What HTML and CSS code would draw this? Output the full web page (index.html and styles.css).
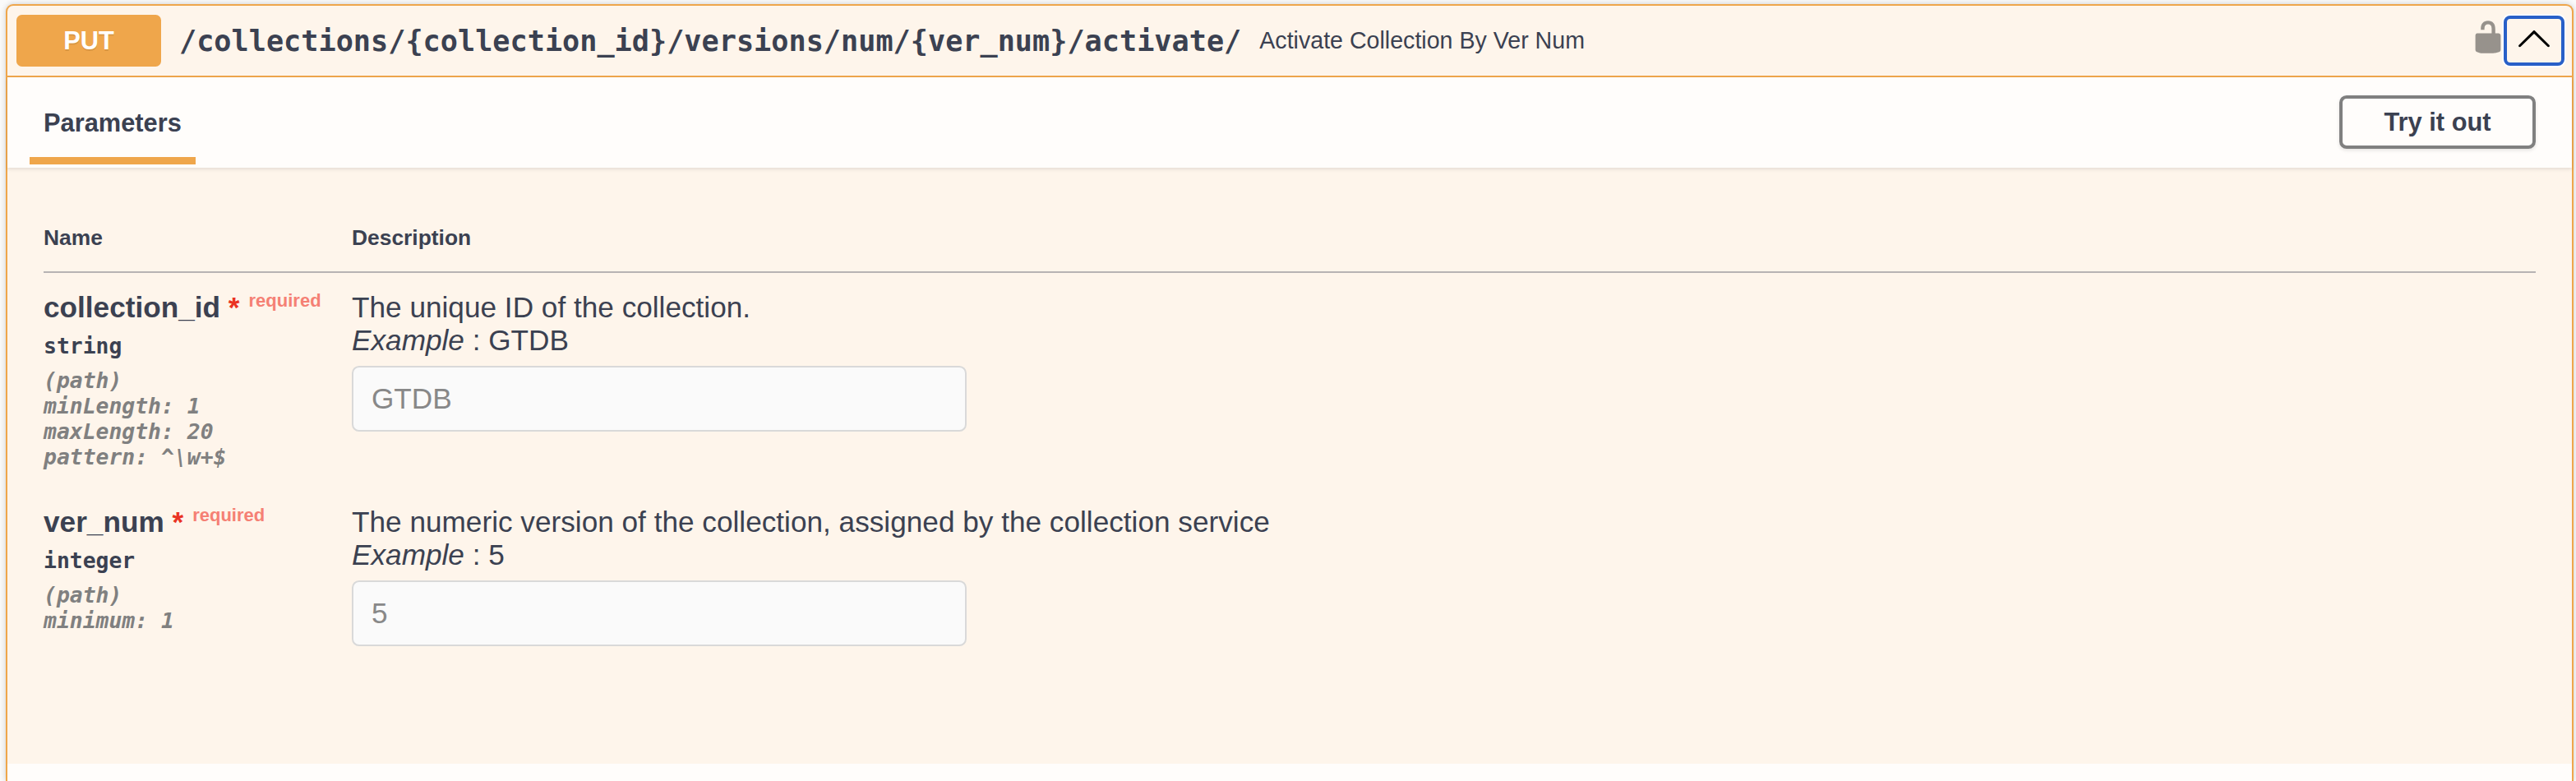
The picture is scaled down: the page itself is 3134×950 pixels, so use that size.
FILE: index.html
```html
<!DOCTYPE html>
<html lang="en">
<head>
<meta charset="utf-8">
<title>Activate Collection By Ver Num</title>
<link rel="stylesheet" href="styles.css">
</head>
<body>
<main class="opblock">
  <header class="summary">
    <span class="method">PUT</span>
    <span class="path">/collections/{collection_id}/versions/num/{ver_num}/activate/</span>
    <span class="summary-text">Activate Collection By Ver Num</span>
    <svg class="lock" viewBox="0 0 20 20" aria-hidden="true"><path d="M15.8 8H14V5.6C14 2.703 12.665 1 10 1 7.334 1 6 2.703 6 5.6V6h2v-.801C8 3.754 8.797 3 10 3c1.203 0 2 .754 2 2.199V8H4c-.553 0-1 .646-1 1.199V17c0 .549.428 1.139.951 1.307l1.197.387C5.672 18.861 6.55 19 7.1 19h5.8c.549 0 1.428-.139 1.951-.307l1.196-.387c.524-.167.953-.757.953-1.306V9.199C17 8.646 16.352 8 15.8 8z"/></svg>
    <button class="toggle" aria-label="Collapse operation">
      <svg class="arrow" viewBox="0 0 20 20" aria-hidden="true"><path d="M17.418 14.908C17.69 15.176 18.127 15.176 18.397 14.908C18.667 14.64 18.668 14.207 18.397 13.939L10.489 6.109C10.219 5.841 9.782 5.841 9.51 6.109L1.602 13.939C1.332 14.207 1.332 14.64 1.602 14.908C1.873 15.176 2.311 15.176 2.581 14.908L10 7.767Z"/></svg>
    </button>
  </header>
  <div class="section-header">
    <h4 class="tab">Parameters</h4>
    <button class="try">Try it out</button>
  </div>
  <section class="parameters">
    <div class="row head">
      <div>Name</div>
      <div>Description</div>
    </div>
    <div class="row">
      <div>
        <div class="name">collection_id <span class="star">*</span><span class="required">required</span></div>
        <div class="type">string</div>
        <div class="meta">(path)<br>minLength: 1<br>maxLength: 20<br>pattern: ^\w+$</div>
      </div>
      <div class="description">
        <p>The unique ID of the collection.</p>
        <p><i>Example</i> : GTDB</p>
        <input class="field" placeholder="GTDB" disabled>
      </div>
    </div>
    <div class="row">
      <div>
        <div class="name">ver_num <span class="star">*</span><span class="required">required</span></div>
        <div class="type">integer</div>
        <div class="meta">(path)<br>minimum: 1</div>
      </div>
      <div class="description">
        <p>The numeric version of the collection, assigned by the collection service</p>
        <p><i>Example</i> : 5</p>
        <input class="field" placeholder="5" disabled>
      </div>
    </div>
  </section>
  <div class="responses-header"></div>
</main>
</body>
</html>
```
FILE: styles.css
```css
* { box-sizing: border-box; }

body {
  margin: 0;
  height: 950px;
  padding: 5px 3px 0 7px;
  background: #fafafa;
  color: #3b4151;
  font-family: "Liberation Sans", Arial, sans-serif;
}

.opblock {
  height: 945px;
  border: 2px solid #efa64b;
  border-bottom: 0;
  border-radius: 9px 9px 0 0;
  background: #fef5eb;
  box-shadow: 0 0 7px rgba(0, 0, 0, .19);
}

.summary {
  display: flex;
  align-items: center;
  height: 87px;
  padding: 0 9px 0 11px;
  border-bottom: 2px solid #efa64b;
}

.method {
  width: 176px;
  height: 63px;
  border-radius: 6.6px;
  background: #efa64b;
  color: #fff;
  font-size: 30.8px;
  font-weight: 700;
  line-height: 64px;
  text-align: center;
  text-shadow: 0 2px 0 rgba(0, 0, 0, .1);
}

.path {
  margin-left: 22px;
  font: 700 35.2px/40px "DejaVu Sans Mono", monospace;
}

.summary-text {
  margin-left: 22px;
  padding-bottom: 2px;
  font-size: 28.6px;
  line-height: 34px;
}

.lock {
  width: 44px;
  height: 44px;
  margin: 0 -3px 9px auto;
  opacity: .4;
}

.toggle {
  display: flex;
  align-items: center;
  justify-content: center;
  width: 74px;
  height: 61px;
  padding: 0 0 8px;
  border: 4px solid #2860c8;
  border-radius: 8px;
  background: transparent;
  box-shadow: 0 0 0 2px #fff;
}

.arrow { width: 44px; height: 44px; flex: none; }

.section-header {
  position: relative;
  display: flex;
  justify-content: space-between;
  align-items: center;
  height: 110px;
  padding: 0 44px 0 27px;
  background: #fffdfb;
  box-shadow: 0 2px 4px rgba(0, 0, 0, .1);
}

.tab {
  align-self: flex-end;
  width: 202px;
  height: 96px;
  margin: 0 0 4px;
  padding: 5px 0 0 17px;
  border-bottom: 9px solid #efa64b;
  font-size: 30.8px;
  line-height: 82px;
}

.try {
  width: 239px;
  height: 65px;
  margin-bottom: 1px;
  padding: 0;
  border: 4px solid #808080;
  border-radius: 8.8px;
  background: transparent;
  box-shadow: 0 2px 4px rgba(0, 0, 0, .1);
  color: #3b4151;
  font: 700 30.8px/36px "Liberation Sans", Arial, sans-serif;
}

.parameters {
  height: 725px;
  padding: 48px 44px 0;
}

.row {
  display: grid;
  grid-template-columns: 375px 1fr;
  height: 261px;
  padding-top: 22px;
}

.row.head {
  height: 80px;
  border-bottom: 2px solid #b7b3b3;
  font-size: 26.4px;
  font-weight: 700;
  line-height: 30px;
}

.name {
  height: 40px;
  font-size: 35.2px;
  font-weight: 700;
  line-height: 40px;
  white-space: nowrap;
}

.star { color: #ea3323; }

.required {
  position: relative;
  top: -13px;
  padding-left: 11px;
  color: #f58074;
  font-size: 22px;
}

.type,
.meta {
  font: 700 26.4px/31px "DejaVu Sans Mono", monospace;
}

.type { padding-top: 11px; }

.meta {
  padding-top: 11px;
  color: #808080;
  font-style: italic;
}

.description {
  font-size: 35.2px;
  line-height: 40px;
}

.description p { margin: 0; }

.field {
  display: block;
  width: 748px;
  height: 80px;
  margin-top: 11px;
  padding: 0 22px;
  border: 2px solid #d9d9d9;
  border-radius: 8.8px;
  background: #fafafa;
  font: 35.2px "Liberation Sans", Arial, sans-serif;
}

.field::placeholder { color: #888; }

.responses-header {
  height: 21px;
  background: #fffdfb;
}
```
